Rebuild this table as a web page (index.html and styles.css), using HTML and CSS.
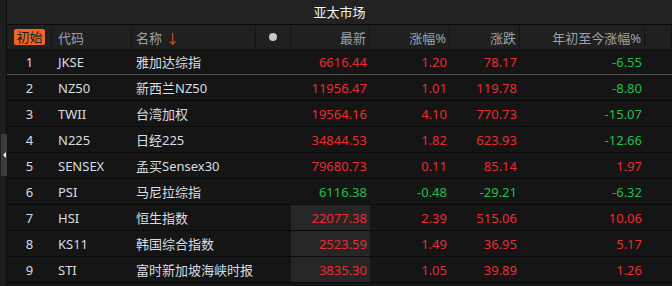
FILE: index.html
```html
<!DOCTYPE html>
<html lang="zh-CN">
<head>
    <meta charset="UTF-8">
    <meta name="viewport" content="width=device-width, initial-scale=1.0">
    <title>亚太市场</title>
    <link rel="stylesheet" href="styles.css">
</head>
<body>

    <div class="side">
        <div class="thumb"><span class="tri"></span></div>
    </div>

    <div class="panel">
        <div class="title">亚太市场</div>

        <div class="row head">
            <div class="cell c-rank"><span class="badge">初始</span></div>
            <div class="cell c-code">代码</div>
            <div class="cell c-name">名称 <span class="arrow">↓</span></div>
            <div class="cell c-dot"><span class="dot"></span></div>
            <div class="cell num">最新</div>
            <div class="cell num">涨幅%</div>
            <div class="cell num">涨跌</div>
            <div class="cell num">年初至今涨幅%</div>
            <div class="cell"></div>
        </div>

        <div class="row selected">
            <div class="cell c-rank">1</div>
            <div class="cell c-code">JKSE</div>
            <div class="cell c-name">雅加达综指</div>
            <div class="cell"></div>
            <div class="cell num up">6616.44</div>
            <div class="cell num up">1.20</div>
            <div class="cell num up">78.17</div>
            <div class="cell num down">-6.55</div>
            <div class="cell"></div>
        </div>

        <div class="row">
            <div class="cell c-rank">2</div>
            <div class="cell c-code">NZ50</div>
            <div class="cell c-name">新西兰NZ50</div>
            <div class="cell"></div>
            <div class="cell num up">11956.47</div>
            <div class="cell num up">1.01</div>
            <div class="cell num up">119.78</div>
            <div class="cell num down">-8.80</div>
            <div class="cell"></div>
        </div>

        <div class="row">
            <div class="cell c-rank">3</div>
            <div class="cell c-code">TWII</div>
            <div class="cell c-name">台湾加权</div>
            <div class="cell"></div>
            <div class="cell num up">19564.16</div>
            <div class="cell num up">4.10</div>
            <div class="cell num up">770.73</div>
            <div class="cell num down">-15.07</div>
            <div class="cell"></div>
        </div>

        <div class="row">
            <div class="cell c-rank">4</div>
            <div class="cell c-code">N225</div>
            <div class="cell c-name">日经225</div>
            <div class="cell"></div>
            <div class="cell num up">34844.53</div>
            <div class="cell num up">1.82</div>
            <div class="cell num up">623.93</div>
            <div class="cell num down">-12.66</div>
            <div class="cell"></div>
        </div>

        <div class="row">
            <div class="cell c-rank">5</div>
            <div class="cell c-code">SENSEX</div>
            <div class="cell c-name">孟买Sensex30</div>
            <div class="cell"></div>
            <div class="cell num up">79680.73</div>
            <div class="cell num up">0.11</div>
            <div class="cell num up">85.14</div>
            <div class="cell num up">1.97</div>
            <div class="cell"></div>
        </div>

        <div class="row">
            <div class="cell c-rank">6</div>
            <div class="cell c-code">PSI</div>
            <div class="cell c-name">马尼拉综指</div>
            <div class="cell"></div>
            <div class="cell num down">6116.38</div>
            <div class="cell num down">-0.48</div>
            <div class="cell num down">-29.21</div>
            <div class="cell num down">-6.32</div>
            <div class="cell"></div>
        </div>

        <div class="row">
            <div class="cell c-rank">7</div>
            <div class="cell c-code">HSI</div>
            <div class="cell c-name">恒生指数</div>
            <div class="cell"></div>
            <div class="cell num up lit">22077.38</div>
            <div class="cell num up">2.39</div>
            <div class="cell num up">515.06</div>
            <div class="cell num up">10.06</div>
            <div class="cell"></div>
        </div>

        <div class="row">
            <div class="cell c-rank">8</div>
            <div class="cell c-code">KS11</div>
            <div class="cell c-name">韩国综合指数</div>
            <div class="cell"></div>
            <div class="cell num up lit">2523.59</div>
            <div class="cell num up">1.49</div>
            <div class="cell num up">36.95</div>
            <div class="cell num up">5.17</div>
            <div class="cell"></div>
        </div>

        <div class="row">
            <div class="cell c-rank">9</div>
            <div class="cell c-code">STI</div>
            <div class="cell c-name">富时新加坡海峡时报</div>
            <div class="cell"></div>
            <div class="cell num up lit">3835.30</div>
            <div class="cell num up">1.05</div>
            <div class="cell num up">39.89</div>
            <div class="cell num up">1.26</div>
            <div class="cell"></div>
        </div>
    </div>

</body>
</html>
```

FILE: styles.css
```css
/* General */
body {
    margin: 0;
    width: 672px;
    height: 286px;
    overflow: hidden;
    display: flex;
    background: #151515;
    font-family: "Noto Sans", "Noto Sans CJK SC", sans-serif;
    font-size: 13px;
    color: #d8dde3;
}

/* Left strip with the scroll handle */
.side {
    width: 7px;
    flex: none;
    background: #1e1e1e;
    border-right: 1px solid #0c0c0c;
    display: flex;
    flex-direction: column;
    justify-content: flex-start;
    padding-top: 134px;
    box-sizing: border-box;
}

.thumb {
    margin-left: 1px;
    width: 6px;
    height: 42px;
    background: #3b3b3b;
    display: flex;
    align-items: center;
    justify-content: center;
}

.tri {
    width: 0;
    height: 0;
    border-top: 3px solid transparent;
    border-bottom: 3px solid transparent;
    border-right: 3px solid #f0f0f0;
}

.panel {
    flex: 1;
    display: flex;
    flex-direction: column;
}

/* Title bar */
.title {
    height: 24px;
    line-height: 24px;
    background: #222222;
    border-bottom: 1px solid #0a0a0a;
    text-align: center;
    color: #f2f2f2;
    font-size: 13px;
}

/* Rows */
.row {
    display: grid;
    grid-template-columns: 45px 80px 124px 35px 79px 80px 70px 125px 1fr;
    height: 25px;
    border-bottom: 1px solid #0b0b0b;
}

.row.head {
    height: 24px;
    background: #202020;
    border-bottom: none;
    color: #9aa3ad;
}

.row.head .cell {
    border-right: 1px solid #141414;
}

.row.selected {
    border-bottom-color: #555555;
}

.cell {
    display: flex;
    align-items: center;
    white-space: nowrap;
    box-sizing: border-box;
}

.c-rank {
    justify-content: center;
}

.c-code {
    padding-left: 6px;
}

.c-name {
    padding-left: 4px;
}

.c-dot {
    justify-content: center;
}

.num {
    justify-content: flex-end;
    padding-right: 3px;
}

.badge {
    background: #f26522;
    color: #1a1a1a;
    border-radius: 2px;
    padding: 0 2px;
    line-height: 16px;
    margin-left: 1px;
}

.arrow {
    color: #f0502a;
    margin-left: 4px;
}

.dot {
    width: 8px;
    height: 8px;
    border-radius: 50%;
    background: #c9c9c9;
}

.up {
    color: #ec2a34;
}

.down {
    color: #1ec04a;
}

.lit {
    background: #262626;
}
```
